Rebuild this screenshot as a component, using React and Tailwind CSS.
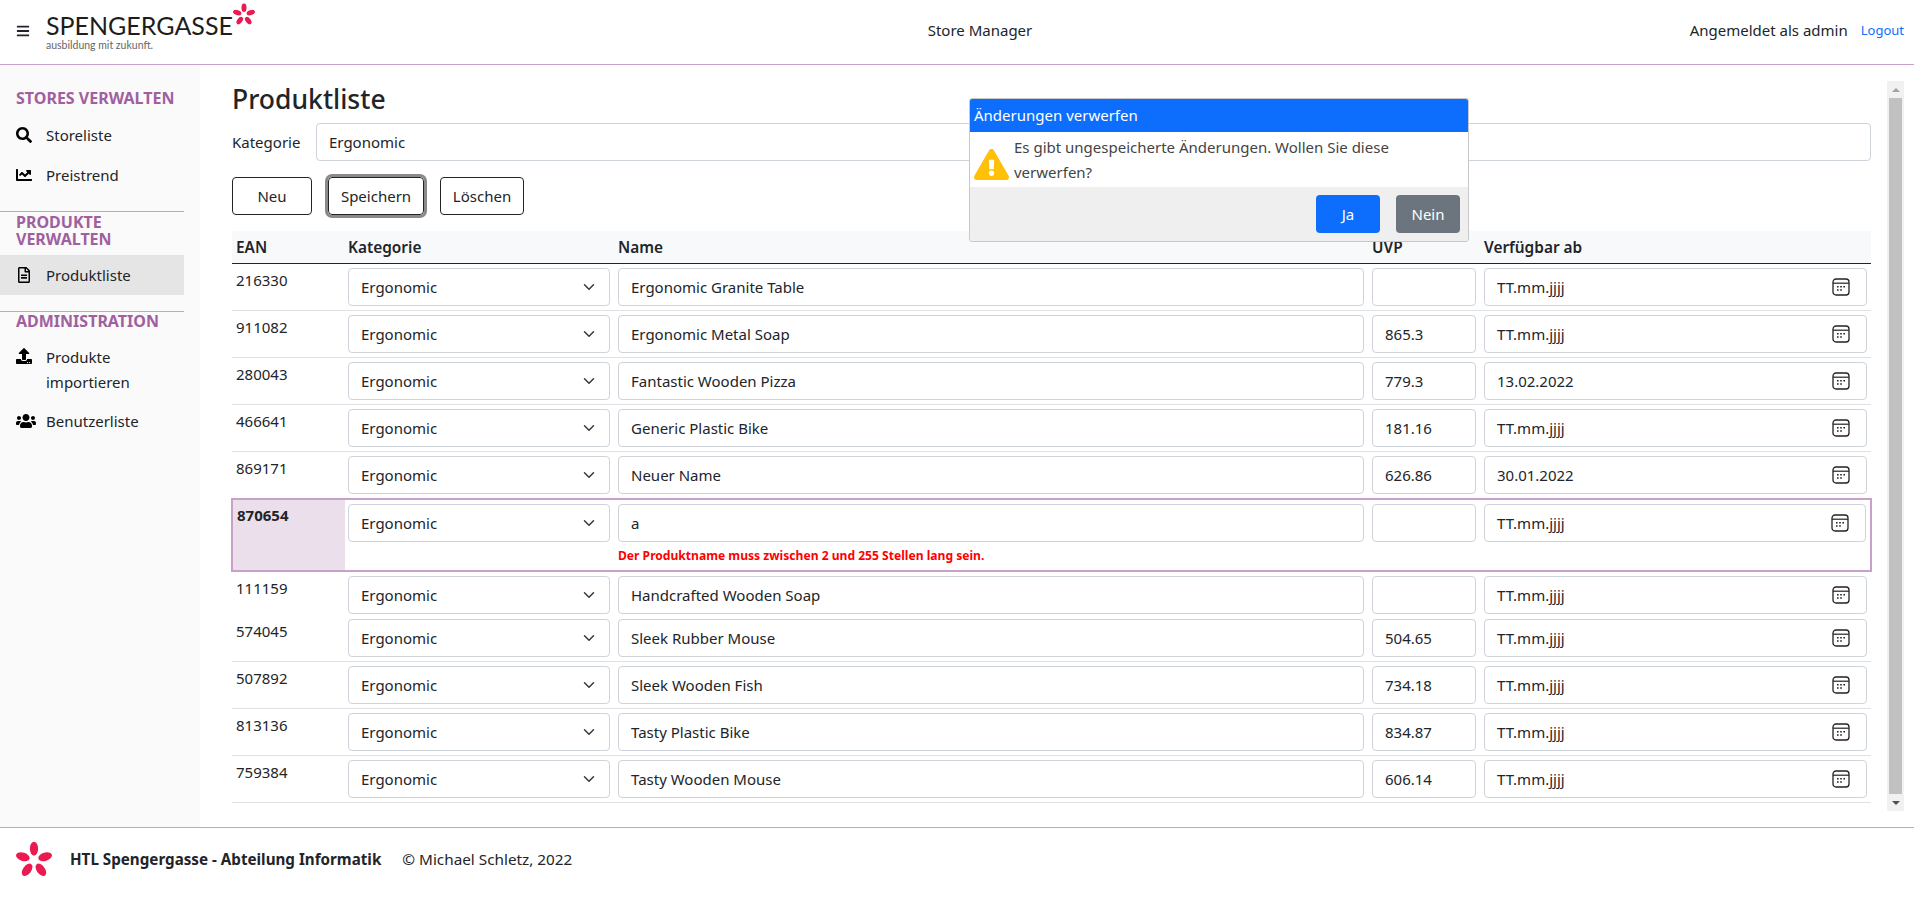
import { FaBars, FaSearch, FaChartLine, FaRegFileAlt, FaUpload, FaUsers, FaExclamationTriangle } from "react-icons/fa";

const products = [
  { ean: "216330", name: "Ergonomic Granite Table", uvp: "", date: "TT.mm.jjjj" },
  { ean: "911082", name: "Ergonomic Metal Soap", uvp: "865.3", date: "TT.mm.jjjj" },
  { ean: "280043", name: "Fantastic Wooden Pizza", uvp: "779.3", date: "13.02.2022" },
  { ean: "466641", name: "Generic Plastic Bike", uvp: "181.16", date: "TT.mm.jjjj" },
];

const moreProducts = [
  { ean: "574045", name: "Sleek Rubber Mouse", uvp: "504.65", date: "TT.mm.jjjj" },
  { ean: "507892", name: "Sleek Wooden Fish", uvp: "734.18", date: "TT.mm.jjjj" },
  { ean: "813136", name: "Tasty Plastic Bike", uvp: "834.87", date: "TT.mm.jjjj" },
  { ean: "759384", name: "Tasty Wooden Mouse", uvp: "606.14", date: "TT.mm.jjjj" },
];

function Star({ className }) {
  return (
    <svg viewBox="0 0 40 40" className={className}>
      {[0, 72, 144, 216, 288].map((a) => (
        <ellipse key={a} cx="20" cy="8.5" rx="4.6" ry="7.8" fill="#ea1b50" transform={`rotate(${a} 20 21.5)`} />
      ))}
    </svg>
  );
}

function CalendarIcon() {
  return (
    <svg viewBox="0 0 18 18" className="w-[18px] h-[18px] shrink-0 -mt-[1px]">
      <rect x="1" y="1" width="16" height="16" rx="3" fill="none" stroke="#222" strokeWidth="1.3" />
      <path d="M1 5.2h16" stroke="#222" strokeWidth="1.2" />
      <path d="M5 8h1.6v1.6H5zM8.2 8h1.6v1.6H8.2zM11.4 8H13v1.6h-1.6zM5 11.2h1.6v1.6H5zM8.2 11.2h1.6v1.6H8.2z" fill="#222" />
    </svg>
  );
}

function Chevron() {
  return (
    <svg viewBox="0 0 16 16" className="w-4 h-3 shrink-0 -mt-[1px]">
      <path d="m2 5 6 6 6-6" fill="none" stroke="#343a40" strokeWidth="2" strokeLinecap="round" strokeLinejoin="round" />
    </svg>
  );
}

function Field({ className = "", children }) {
  return (
    <div className={`h-[38px] border border-[#ced4da] rounded-[4px] bg-white flex items-center justify-between px-[12px] text-[#212529] ${className}`}>
      {children}
    </div>
  );
}

function Cells({ p, dateClass = "w-[383px]" }) {
  return (
    <>
      <Field className="w-[262px]">
        <span>Ergonomic</span>
        <Chevron />
      </Field>
      <Field className="w-[746px]">{p.name}</Field>
      <Field className="w-[104px]">{p.uvp}</Field>
      <Field className={`${dateClass} pr-[16px]`}>
        <span>{p.date}</span>
        <CalendarIcon />
      </Field>
    </>
  );
}

function Row({ p, rowClass = "pb-[4px] border-b border-[#dee2e6]" }) {
  return (
    <div className={`flex gap-[8px] pt-[4px] ${rowClass}`}>
      <div className="w-[108px] pl-[4px] pt-[1px] text-[#212529]">{p.ean}</div>
      <Cells p={p} />
    </div>
  );
}

function SideItem({ icon, active, top, children }) {
  return (
    <div className={`flex ${top ? "items-start" : "items-center"} gap-[14px] pl-[16px] min-h-[40px] w-[184px] leading-[25px] text-[#212529] ${active ? "bg-[#e5e5e5]" : ""}`}>
      <span className={`w-[16px] text-[16px] text-black shrink-0 ${top ? "pt-[3px]" : ""}`}>{icon}</span>
      <span>{children}</span>
    </div>
  );
}

function Heading({ children }) {
  return <div className="pl-[16px] pr-[20px] text-[16px] leading-[17px] font-bold text-[#a0609f]">{children}</div>;
}

function Sidebar() {
  return (
    <aside className="w-[200px] shrink-0 bg-[#fafafa] pt-[25px] text-[15px]">
      <Heading>STORES VERWALTEN</Heading>
      <div className="mt-[8px]">
        <SideItem icon={<FaSearch />}>Storeliste</SideItem>
        <SideItem icon={<FaChartLine />}>Preistrend</SideItem>
      </div>
      <div className="w-[184px] mt-[16px] border-t border-[#c9a0c9] pt-[2px]">
        <Heading>PRODUKTE VERWALTEN</Heading>
      </div>
      <div className="mt-[7px]">
        <SideItem icon={<FaRegFileAlt />} active>Produktliste</SideItem>
      </div>
      <div className="w-[184px] mt-[16px] border-t border-[#c9a0c9] pt-[1px]">
        <Heading>ADMINISTRATION</Heading>
      </div>
      <div className="mt-[15px] flex flex-col gap-[6px]">
        <SideItem icon={<FaUpload />} top>Produkte importieren</SideItem>
        <SideItem icon={<FaUsers className="w-[20px] h-[20px] max-w-none" />}>Benutzerliste</SideItem>
      </div>
    </aside>
  );
}

function Dialog() {
  return (
    <div className="absolute left-[969px] top-[98px] w-[500px] h-[144px] border border-[#c8c8c8] rounded-[3px] bg-white flex flex-col overflow-hidden">
      <div className="h-[33px] bg-[#0d6efd] text-white text-[15px] flex items-center pl-[4px]">Änderungen verwerfen</div>
      <div className="h-[55px] flex items-center pl-[4px] pr-[16px] text-[15px] leading-[25px] text-[#444]">
        <FaExclamationTriangle className="text-[#ffc107] text-[35px] shrink-0 mt-[10px]" />
        <p className="ml-[5px]">Es gibt ungespeicherte Änderungen. Wollen Sie diese verwerfen?</p>
      </div>
      <div className="flex-1 bg-[#efefef] flex justify-end items-start gap-[16px] pt-[8px] pr-[8px] text-[15px]">
        <button className="w-[64px] h-[38px] rounded-[4px] bg-[#0d6efd] text-white">Ja</button>
        <button className="w-[64px] h-[38px] rounded-[4px] bg-[#6c757d] text-white">Nein</button>
      </div>
    </div>
  );
}

function Scrollbar() {
  return (
    <div className="w-[17px] h-[730px] mt-[16px] ml-[16px] bg-[#f1f1f1] flex flex-col items-center">
      <div className="h-[17px] flex items-center justify-center">
        <div className="w-0 h-0 border-x-[4px] border-x-transparent border-b-[4px] border-b-[#a3a3a3]" />
      </div>
      <div className="flex-1 w-[13px] bg-[#c1c1c1]" />
      <div className="h-[17px] flex items-center justify-center">
        <div className="w-0 h-0 border-x-[4px] border-x-transparent border-t-[4px] border-t-[#505050]" />
      </div>
    </div>
  );
}

export default function App() {
  return (
    <div className="relative h-[902px] w-[1914px] flex flex-col bg-white overflow-hidden font-['Noto_Sans',sans-serif] text-[15px] text-[#212529]">
      <header className="h-[65px] shrink-0 border-b border-[#c9a0c9] flex items-center justify-between pl-[16px] pr-[10px] pb-[3px]">
        <div className="w-[640px] flex items-center">
          <FaBars className="text-[14px] text-[#212529] w-[14px]" />
          <div className="ml-[16px] flex items-start">
            <div>
              <div className="font-['Lato',sans-serif] text-[25px] leading-[28px] text-[#1d1d1b]">SPENGERGASSE</div>
              <div className="font-['Lato',sans-serif] text-[10.5px] leading-[12px] text-[#666]">ausbildung mit zukunft.</div>
            </div>
            <Star className="w-[22px] h-[22px] -mt-[8px]" />
          </div>
        </div>
        <div className="text-[#212529]">Store Manager</div>
        <div className="w-[600px] flex justify-end items-center gap-[13px]">
          <span>Angemeldet als admin</span>
          <a className="text-[13px] text-[#0d6efd]">Logout</a>
        </div>
      </header>

      <div className="flex-1 flex min-h-0">
        <Sidebar />
        <main className="flex-1 flex pl-[32px]">
          <div className="w-[1639px] pt-[16px]">
            <h1 className="text-[26.5px] leading-[36px] font-medium text-[#212529]">Produktliste</h1>
            <div className="flex items-center mt-[6px]">
              <label className="w-[84px]">Kategorie</label>
              <Field className="flex-1">Ergonomic</Field>
            </div>
            <div className="flex gap-[16px] mt-[16px]">
              <button className="w-[80px] h-[38px] border border-[#212529] rounded-[4px]">Neu</button>
              <button className="w-[96px] h-[38px] border border-[#212529] rounded-[4px] outline-[3px] outline-[#8a8a8a]">Speichern</button>
              <button className="w-[84px] h-[38px] border border-[#212529] rounded-[4px]">Löschen</button>
            </div>
            <div className="mt-[16px]">
              <div className="flex gap-[8px] h-[33px] bg-[#f8f9fa] border-b border-[#212529] text-[15.4px] font-semibold items-center pt-[2px]">
                <div className="w-[108px] pl-[4px]">EAN</div>
                <div className="w-[262px]">Kategorie</div>
                <div className="w-[746px]">Name</div>
                <div className="w-[104px]">UVP</div>
                <div>Verfügbar ab</div>
              </div>
              {products.map((p) => <Row key={p.ean} p={p} />)}
              <Row p={{ ean: "869171", name: "Neuer Name", uvp: "626.86", date: "30.01.2022" }} rowClass="pb-[4px]" />
              <div className="relative -mx-px border-2 border-[#c9a0c9] flex h-[74px]">
                <div className="w-[112px] h-full bg-[#ecdfec] pl-[4px] pt-[4px] font-bold">870654</div>
                <div className="pl-[3px] pt-[4px]">
                  <div className="flex gap-[8px]">
                    <Cells p={{ name: "a", uvp: "", date: "TT.mm.jjjj" }} dateClass="w-[382px]" />
                  </div>
                  <div className="ml-[270px] mt-[4px] text-[12.1px] leading-[20px] font-bold text-[#ff0000]">Der Produktname muss zwischen 2 und 255 Stellen lang sein.</div>
                </div>
              </div>
              <Row p={{ ean: "111159", name: "Handcrafted Wooden Soap", uvp: "", date: "TT.mm.jjjj" }} rowClass="pb-[1px]" />
              {moreProducts.map((p) => <Row key={p.ean} p={p} />)}
            </div>
          </div>
          <Scrollbar />
        </main>
      </div>

      <footer className="h-[75px] shrink-0 border-t border-[#c9a0c9] flex items-center pl-[16px] pb-[12px]">
        <Star className="w-[36px] h-[36px]" />
        <span className="ml-[18px] text-[15.2px] font-bold">HTL Spengergasse - Abteilung Informatik</span>
        <span className="ml-[21px] text-[15.3px]">© Michael Schletz, 2022</span>
      </footer>

      <Dialog />
    </div>
  );
}
